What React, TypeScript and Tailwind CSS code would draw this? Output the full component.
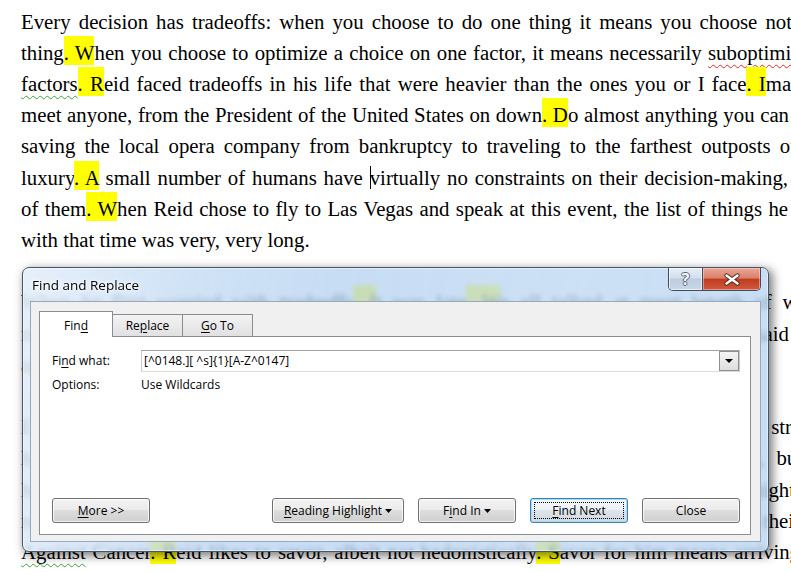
import type { ReactNode } from 'react';

// Yellow "reading highlight" marks in the document
function Hl({ children }: { children: ReactNode }) {
  return <span className="bg-[#ffff00] pt-[5px] pb-px">{children}</span>;
}

function Wavy({ children, tone }: { children: ReactNode; tone: 'red' | 'green' }) {
  return (
    <span
      className={
        tone === 'red'
          ? 'underline decoration-wavy decoration-[#e02828] decoration-1 underline-offset-[4px]'
          : 'underline decoration-wavy decoration-[#3f9f3f] decoration-1 underline-offset-[4px]'
      }
    >
      {children}
    </span>
  );
}

function Key({ children }: { children: ReactNode }) {
  return <span className="underline underline-offset-[2px]">{children}</span>;
}

function Caret() {
  return (
    <svg width="7" height="4" viewBox="0 0 7 4" className="ml-[3px]">
      <path d="M0 0h7L3.5 4z" fill="#000" />
    </svg>
  );
}

const btnBase =
  'h-[25px] rounded-[3px] border text-[12px] text-black flex items-center justify-center';
const btnGray =
  'border-[#707070] bg-[linear-gradient(#f2f2f2_0%,#ebebeb_50%,#dddddd_50%,#cfcfcf_100%)] shadow-[inset_0_0_0_1px_rgba(255,255,255,0.75)]';

function Document() {
  return (
    <div className="pl-[21px] pt-[5.6px] font-['Liberation_Serif','Times_New_Roman',serif] text-[20.8px] leading-[31.2px] text-black">
      <div className="w-[771px] text-justify [text-align-last:justify]">
        Every decision has tradeoffs: when you choose to do one thing it means you choose not
      </div>
      <div className="w-[806px] text-justify [text-align-last:justify]">
        thing<Hl>{'. W'}</Hl>hen you choose to optimize a choice on one factor, it means necessarily{' '}
        <Wavy tone="red">suboptimizing</Wavy>
      </div>
      <div className="w-[806px] text-justify [text-align-last:justify]">
        <Wavy tone="green">factors</Wavy>
        <Hl>{'. R'}</Hl>eid faced tradeoffs in his life that were heavier than the ones you or I face
        <Hl>{'. I'}</Hl>magine
      </div>
      <div className="w-[768px] text-justify [text-align-last:justify]">
        meet anyone, from the President of the United States on down<Hl>{'. D'}</Hl>o almost anything you can
      </div>
      <div className="w-[776px] text-justify [text-align-last:justify]">
        saving the local opera company from bankruptcy to traveling to the farthest outposts of
      </div>
      <div className="w-[767px] text-justify [text-align-last:justify]">
        luxury<Hl>{'. A'}</Hl> small number of humans have{' '}
        <span className="shadow-[inset_1px_0_0_#000]">virtually</span> no constraints on their decision-making,
      </div>
      <div className="w-[767px] text-justify [text-align-last:justify]">
        of them<Hl>{'. W'}</Hl>hen Reid chose to fly to Las Vegas and speak at this event, the list of things he
      </div>
      <div>with that time was very, very long.</div>
      <div className="h-[31.2px]" />
      <div className="w-[802px] text-justify [text-align-last:justify]">
        When he first worried with tradeoffs<Hl>{'. I'}</Hl>t was late<Hl>{'. W'}</Hl>e all talked at great length of what
      </div>
      <div className="w-[768px] text-justify [text-align-last:justify]">
        mattered to him and what did not, and he told me that time was scarce, he said
      </div>
      <div>and that he was glad to be here.</div>
      <div className="h-[31.2px]" />
      <div className="w-[816px] text-justify [text-align-last:justify]">
        Every hour he spends is weighed against the alternatives, which is itself a strategy
      </div>
      <div className="w-[782px] text-justify [text-align-last:justify]">
        he has learned over the years. He does not rush from one meeting to the next, but
      </div>
      <div className="w-[774px] text-justify [text-align-last:justify]">
        he does try to be present for each one, attending to whatever the moment might
      </div>
      <div className="w-[780px] text-justify [text-align-last:justify]">
        require. He listens closely to people, and he asks them questions about their
      </div>
      <div className="w-[779px] text-justify [text-align-last:justify]">
        <Wavy tone="green">Against</Wavy> Cancer<Hl>{'. R'}</Hl>eid likes to savor, albeit not hedonistically
        <Hl>{'. S'}</Hl>avor for him means arriving
      </div>
    </div>
  );
}

function FindReplaceDialog() {
  return (
    <div className="absolute left-[22px] top-[267px] w-[747px] h-[285px] rounded-[7px] border border-[#46566a] overflow-hidden bg-[#b4d2f0]/75 bg-[linear-gradient(100deg,rgba(255,255,255,0.55)_0%,rgba(255,255,255,0.15)_22%,rgba(255,255,255,0)_40%,rgba(255,255,255,0.1)_70%,rgba(255,255,255,0)_100%)] backdrop-blur-[2.5px] shadow-[inset_0_0_0_1px_rgba(255,255,255,0.5),3px_3px_10px_1px_rgba(0,0,0,0.5)] font-['Open_Sans',sans-serif]">
      {/* title bar */}
      <div className="flex h-[33px] pl-[9px] pr-[7px]">
        <span className="mt-[8px] text-[13.5px] leading-[19px] text-black [text-shadow:0_0_6px_#fff,0_0_3px_#fff]">
          Find and Replace
        </span>
        <div className="ml-auto flex h-[23px] rounded-b-[5px] border border-t-0 border-[#3e4d5e] overflow-hidden">
          <div className="w-[34px] border-r border-[#3e4d5e] flex items-center justify-center bg-[linear-gradient(#e6eef7_0%,#d2dfec_45%,#bccde0_50%,#c9d8e8_100%)] shadow-[inset_0_0_0_1px_rgba(255,255,255,0.6)]">
            <span className="text-[16px] leading-none font-bold text-[#f4f6f8] [text-shadow:-1px_0_#5b6878,1px_0_#5b6878,0_-1px_#5b6878,0_1px_#5b6878]">
              ?
            </span>
          </div>
          <div className="w-[57px] flex items-center justify-center bg-[linear-gradient(#eaa896_0%,#d9806a_45%,#c23c1e_52%,#cf5a3e_100%)] shadow-[inset_0_0_0_1px_rgba(255,220,210,0.5)]">
            <svg width="18" height="13" viewBox="0 0 18 13">
              <path d="M3.5 2.5L14.5 10.5M14.5 2.5L3.5 10.5" stroke="#4a2a24" strokeWidth="4.2" strokeLinecap="round" />
              <path d="M3.5 2.5L14.5 10.5M14.5 2.5L3.5 10.5" stroke="#ffffff" strokeWidth="2.4" strokeLinecap="round" />
            </svg>
          </div>
        </div>
      </div>

      {/* client area */}
      <div className="mx-[7px] h-[241px] border border-[#97a9bc] bg-[#f0f0f0] pt-[9px] pl-[8px] pr-[9px] flex flex-col">
        <div className="flex items-end h-[25px] text-[12px] text-black">
          <div className="relative z-10 -mb-px w-[74px] h-[26px] border border-b-0 border-[#898c95] bg-white flex justify-center pt-[5px]">
            Fin<Key>d</Key>
          </div>
          <div className="w-[70px] h-[22px] border border-l-0 border-b-0 border-[#898c95] bg-[linear-gradient(#f3f3f3,#e1e1e1)] flex items-center justify-center">
            Re<Key>p</Key>lace
          </div>
          <div className="w-[70px] h-[22px] border border-l-0 border-b-0 border-[#898c95] bg-[linear-gradient(#f3f3f3,#e1e1e1)] flex items-center justify-center">
            <Key>G</Key>o To
          </div>
        </div>

        <div className="h-[199px] border border-[#898c95] bg-white pl-[12px] pr-[10px] pt-[13px] pb-[11px] flex flex-col text-[12px] text-black">
          <div className="flex items-center h-[22px]">
            <span className="w-[89px]">
              Fi<Key>n</Key>d what:
            </span>
            <div className="flex-1 h-[22px] border border-[#a3a3a3] border-b-[#dcdcdc] border-l-[#c8c8c8] border-r-[#c8c8c8] bg-white flex items-center">
              <span className="flex-1 pl-[2px]">[^0148.][ ^s]{'{1}'}[A-Z^0147]</span>
              <div className="w-[20px] h-[20px] border border-[#8f8f8f] bg-[linear-gradient(#f4f4f4,#dedede)] flex items-center justify-center">
                <svg width="8" height="4" viewBox="0 0 8 4">
                  <path d="M0 0h8L4 4z" fill="#000" />
                </svg>
              </div>
            </div>
          </div>
          <div className="flex mt-[5px] leading-[16px]">
            <span className="w-[89px]">Options:</span>
            <span>Use Wildcards</span>
          </div>

          <div className="mt-auto flex">
            <button className={`${btnBase} ${btnGray} w-[98px]`}>
              <Key>M</Key>ore &gt;&gt;
            </button>
            <div className="ml-auto flex gap-[14px]">
              <button className={`${btnBase} ${btnGray} w-[132px]`}>
                <Key>R</Key>eading Highlight
                <Caret />
              </button>
              <button className={`${btnBase} ${btnGray} w-[98px]`}>
                F<Key>i</Key>nd In
                <Caret />
              </button>
              <button className={`${btnBase} w-[98px] border-[#3c7fb1] bg-[linear-gradient(#f4f8fb_0%,#ecf1f5_50%,#dde4ea_50%,#d0d8df_100%)] shadow-[inset_0_0_0_1px_#a8dcf7] p-[3px]`}>
                <span className="w-full h-full border border-dotted border-black flex items-center justify-center">
                  <Key>F</Key>ind Next
                </span>
              </button>
              <button className={`${btnBase} ${btnGray} w-[98px]`}>Close</button>
            </div>
          </div>
        </div>
      </div>
    </div>
  );
}

export default function App() {
  return (
    <div className="relative w-[791px] h-[572px] overflow-hidden bg-white">
      <Document />
      <FindReplaceDialog />
    </div>
  );
}
